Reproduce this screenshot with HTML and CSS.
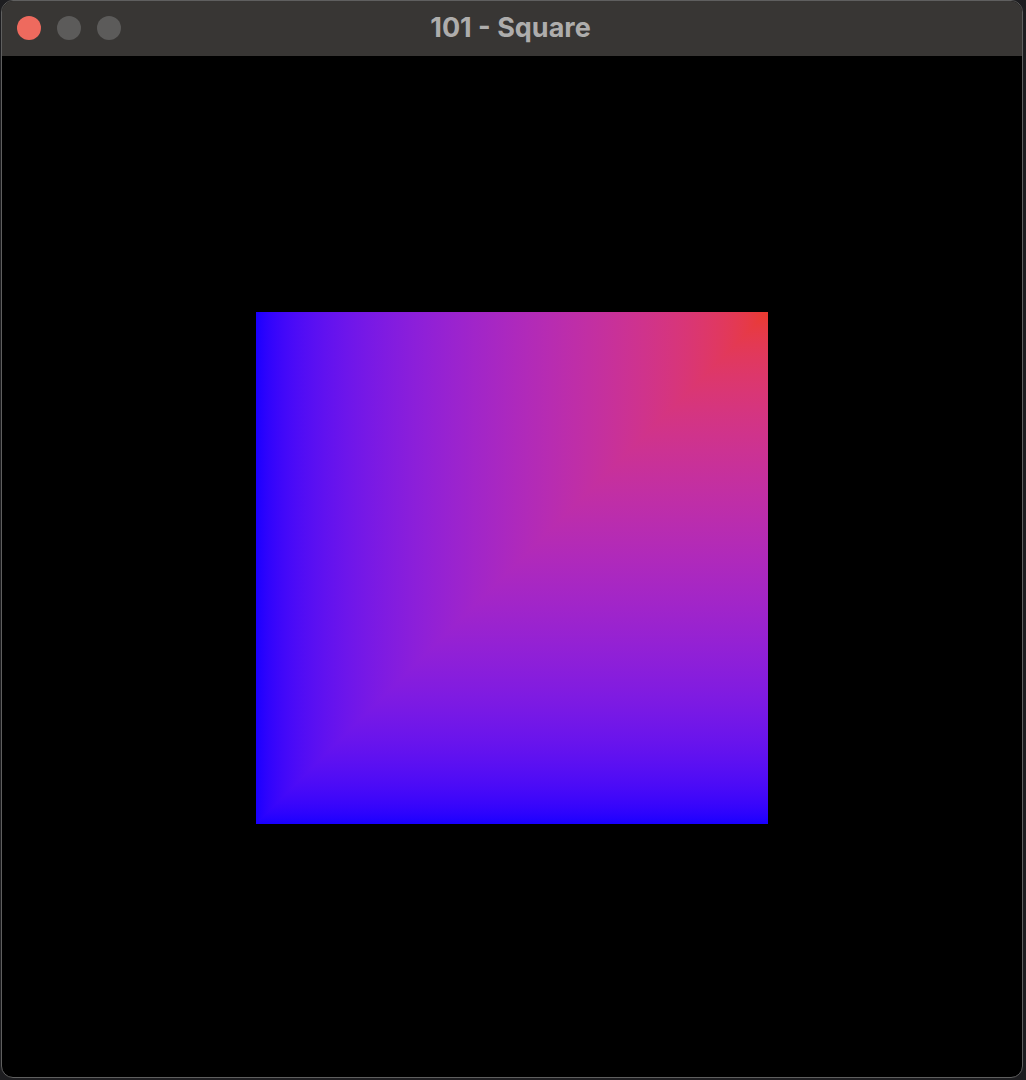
FILE: index.html
```html
<!DOCTYPE html>
<html>
<head>
<meta charset="utf-8">
<title>101 - Square</title>
<link rel="stylesheet" href="styles.css">
</head>
<body>
<div class="window">
  <div class="titlebar">
    <div class="lights">
      <span class="light close"></span>
      <span class="light"></span>
      <span class="light"></span>
    </div>
    <div class="title">101 - Square</div>
  </div>
  <div class="content">
    <div class="square">
      <div class="tri-upper"></div>
    </div>
  </div>
</div>
</body>
</html>
```

FILE: styles.css
```css
html, body {
  margin: 0;
  padding: 0;
  background: #1d1d20;
  width: 1026px;
  height: 1080px;
  overflow: hidden;
}

.window {
  box-sizing: border-box;
  margin-left: 1px;
  width: 1022px;
  height: 1078px;
  border: 1px solid #5f5f5f;
  border-radius: 12px;
  overflow: hidden;
  background: #000;
  display: flex;
  flex-direction: column;
}

.titlebar {
  position: relative;
  height: 55px;
  flex: 0 0 55px;
  background: #383634;
  display: flex;
  align-items: center;
  justify-content: center;
}

.lights {
  position: absolute;
  left: 15px;
  top: 15px;
  display: flex;
  gap: 16px;
}

.light {
  width: 24px;
  height: 24px;
  border-radius: 50%;
  background: #5c5b5a;
}

.light.close {
  background: #ee6a5e;
}

.title {
  font-family: "Inter", "Liberation Sans", sans-serif;
  font-weight: 700;
  font-size: 27px;
  color: #aeadac;
  margin-right: 3px;
  margin-top: -2px;
}

.content {
  flex: 1;
  display: flex;
  flex-direction: column;
  align-items: center;
  padding-top: 256px;
}

.square {
  position: relative;
  width: 512px;
  height: 512px;
  background: linear-gradient(to bottom in srgb-linear, #ea3b2c, #1800ff);
}

.tri-upper {
  position: absolute;
  inset: 0;
  background: linear-gradient(to right in srgb-linear, #1800ff, #ea3b2c);
  clip-path: polygon(0 0, 100% 0, 0 100%);
}
```
